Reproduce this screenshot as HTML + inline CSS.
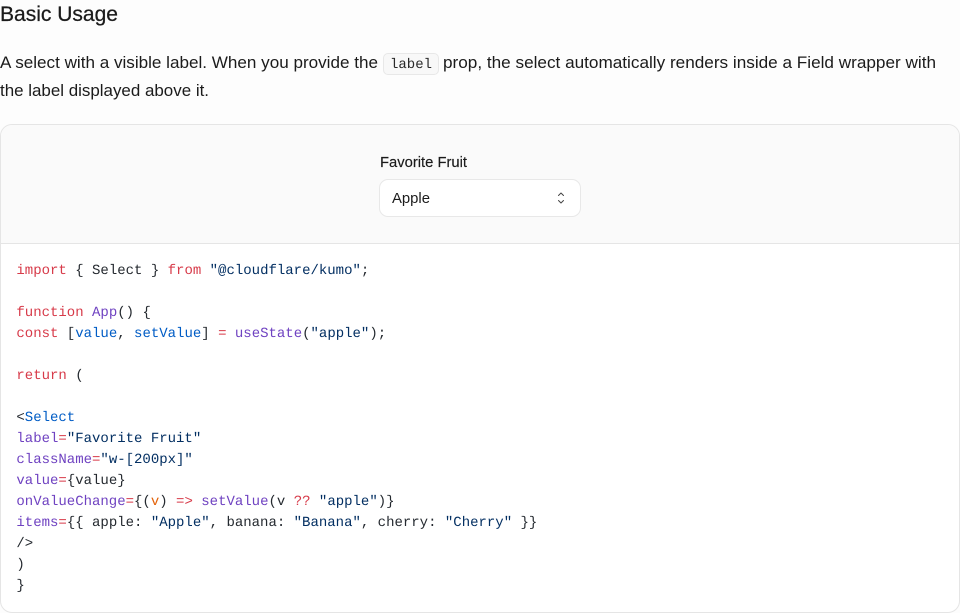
<!DOCTYPE html>
<html lang="en">
<head>
<meta charset="utf-8">
<title>Basic Usage</title>
<style>
html,body{margin:0;padding:0;width:960px;height:613px;overflow:hidden;background:#fdfdfd;}
body{position:relative;font-family:"Liberation Sans",sans-serif;color:#1a1a1a;}
svg.t{position:absolute;left:0;top:0;width:960px;height:613px;}
svg.t text{font-family:"Liberation Sans",sans-serif;fill:#1b1b1b;}
.chip{position:absolute;left:383px;top:53px;width:54px;height:20px;border:1px solid #e8e8e8;border-radius:5px;background:#f8f8f8;font:14px/22px "Liberation Mono",monospace;text-align:center;color:#2a2a2a;text-rendering:geometricPrecision;}
.card{position:absolute;left:0;top:124px;width:958px;height:487px;border:1px solid #e5e5e5;border-radius:12px;background:#fff;overflow:hidden;}
.head{position:absolute;left:0;top:0;width:958px;height:118px;background:#fafafa;border-bottom:1px solid #e5e5e5;}
.sel{position:absolute;left:379px;top:179px;width:200px;height:36px;border:1px solid #e8e8e8;border-radius:9px;background:#fff;}
pre{position:absolute;left:16.4px;top:261px;margin:0;font:14px/21px "Liberation Mono",monospace;color:#24292f;text-rendering:geometricPrecision;}
.k{color:#d73a49}.f{color:#6f42c1}.s{color:#032f62}.b{color:#005cc5}.o{color:#e36209}
</style>
</head>
<body>
<div class="card"><div class="head"></div></div>
<div class="chip">label</div>
<div class="sel"></div>
<svg class="t" viewBox="0 0 960 613">
<text x="0" y="21" font-size="21" textLength="118" lengthAdjust="spacingAndGlyphs" stroke="#1b1b1b" stroke-width=".25">Basic Usage</text>
<text x="0" y="68" font-size="16.8" textLength="378" lengthAdjust="spacingAndGlyphs">A select with a visible label. When you provide the</text>
<text x="443" y="68" font-size="16.8" textLength="493" lengthAdjust="spacingAndGlyphs">prop, the select automatically renders inside a Field wrapper with</text>
<text x="0" y="96" font-size="16.8" textLength="209" lengthAdjust="spacingAndGlyphs">the label displayed above it.</text>
<text x="380" y="167" font-size="14.7" textLength="87" lengthAdjust="spacingAndGlyphs" stroke="#1b1b1b" stroke-width=".15">Favorite Fruit</text>
<text x="392" y="203" font-size="14.7" textLength="38" lengthAdjust="spacingAndGlyphs">Apple</text>
<path d="M558.5 195.5L561 193L563.5 195.5M558.5 200.5L561 203L563.5 200.5" fill="none" stroke="#444" stroke-width="1" stroke-linecap="round" stroke-linejoin="round"/>
</svg>
<pre><span class="k">import</span> { Select } <span class="k">from</span> <span class="s">"@cloudflare/kumo"</span>;

<span class="k">function</span> <span class="f">App</span>() {
<span class="k">const</span> [<span class="b">value</span>, <span class="b">setValue</span>] <span class="k">=</span> <span class="f">useState</span>(<span class="s">"apple"</span>);

<span class="k">return</span> (

&lt;<span class="b">Select</span>
<span class="f">label</span><span class="k">=</span><span class="s">"Favorite Fruit"</span>
<span class="f">className</span><span class="k">=</span><span class="s">"w-[200px]"</span>
<span class="f">value</span><span class="k">=</span>{value}
<span class="f">onValueChange</span><span class="k">=</span>{(<span class="o">v</span>) <span class="k">=&gt;</span> <span class="f">setValue</span>(v <span class="k">??</span> <span class="s">"apple"</span>)}
<span class="f">items</span><span class="k">=</span>{{ apple: <span class="s">"Apple"</span>, banana: <span class="s">"Banana"</span>, cherry: <span class="s">"Cherry"</span> }}
/&gt;
)
}</pre>
</body>
</html>
